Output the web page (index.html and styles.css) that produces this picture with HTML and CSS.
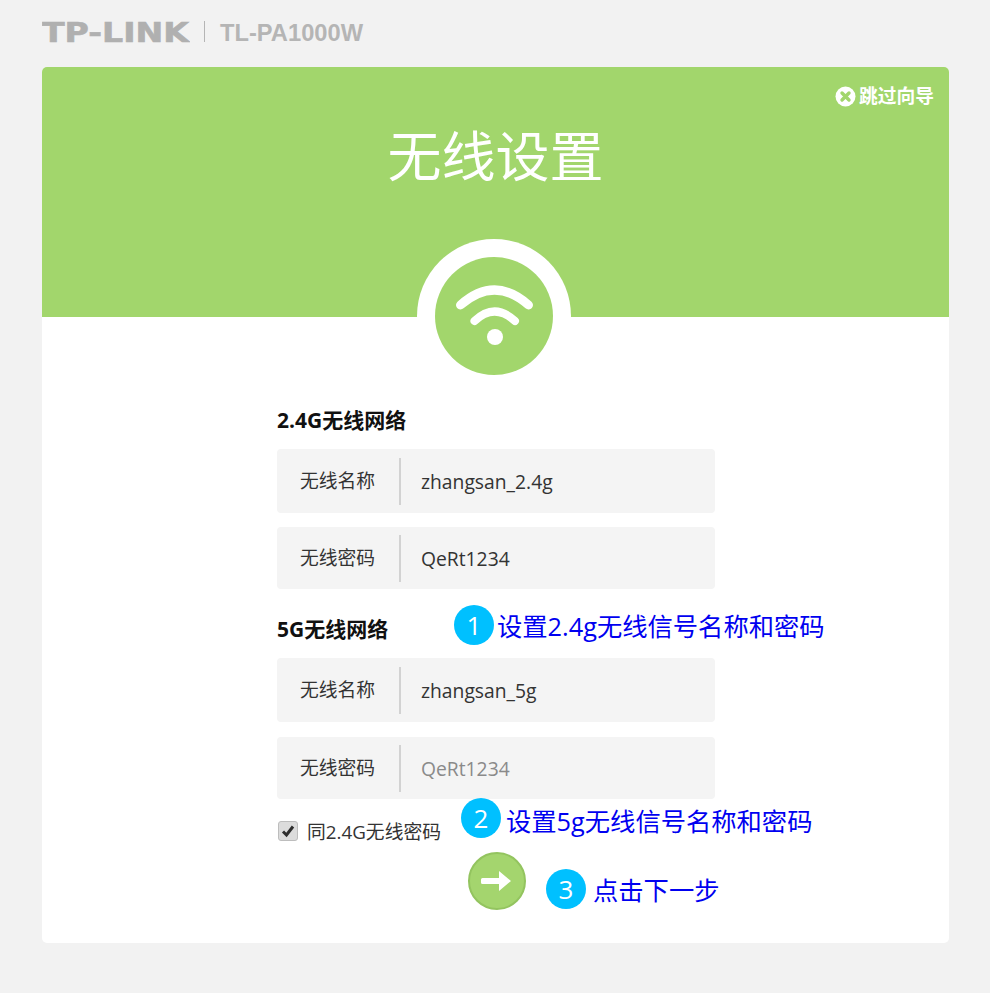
FILE: index.html
```html
<!DOCTYPE html>
<html lang="zh-CN">
<head>
  <meta charset="UTF-8" />
  <title>无线设置</title>
  <link rel="stylesheet" href="styles.css">
</head>
<body>

  <div class="topbar">
    <svg class="logo" width="148" height="32" viewBox="0 0 148 32">
      <text x="0" y="24" textLength="147" lengthAdjust="spacingAndGlyphs">TP-LINK</text>
    </svg>
    <span class="topbar-sep"></span>
    <span class="model">TL-PA1000W</span>
  </div>

  <div class="card">
    <div class="banner">
      <a class="skip">
        <svg width="21" height="21" viewBox="0 0 21 21">
          <circle cx="10.5" cy="10.5" r="10" fill="#fff"/>
          <path d="M7 7l7 7M14 7l-7 7" stroke="#a2d66c" stroke-width="3.4" stroke-linecap="round"/>
        </svg>
        <span>跳过向导</span>
      </a>
      <h1>无线设置</h1>
      <div class="ring">
        <svg width="118" height="118" viewBox="0 0 118 118">
          <circle cx="59" cy="59" r="59" fill="#a2d66c"/>
          <path d="M25.5 48Q59.5 18 93.5 48" fill="none" stroke="#fff" stroke-width="9" stroke-linecap="round"/>
          <path d="M39.5 64Q59.5 45 80 64" fill="none" stroke="#fff" stroke-width="8" stroke-linecap="round"/>
          <circle cx="60" cy="80" r="8" fill="#fff"/>
        </svg>
      </div>
    </div>

    <div class="form">
      <h3>2.4G无线网络</h3>
      <div class="field field-tall">
        <span class="field-label">无线名称</span>
        <span class="field-value">zhangsan_2.4g</span>
      </div>
      <div class="field">
        <span class="field-label">无线密码</span>
        <span class="field-value">QeRt1234</span>
      </div>

      <h3 class="second">5G无线网络</h3>
      <div class="field field-tall">
        <span class="field-label">无线名称</span>
        <span class="field-value">zhangsan_5g</span>
      </div>
      <div class="field field-low">
        <span class="field-label">无线密码</span>
        <span class="field-value muted">QeRt1234</span>
      </div>

      <label class="same">
        <span class="checkbox">
          <svg width="14" height="14" viewBox="0 0 14 14">
            <path d="M2 7.500l3.500 3.500 6.500-8.500" fill="none" stroke="#2e2e2e" stroke-width="3"/>
          </svg>
        </span>
        同2.4G无线密码
      </label>

      <button class="next">
        <svg width="32" height="22" viewBox="0 0 32 22">
          <path d="M1.500 8h16.500v-7l12 10-12 10v-7h-16.500q-1.500 0-1.500-1.500v-3q0-1.500 1.500-1.500z" fill="#fff"/>
        </svg>
      </button>
    </div>
  </div>

  <div class="note note-1"><span class="num">1</span><span class="note-text">设置2.4g无线信号名称和密码</span></div>
  <div class="note note-2"><span class="num">2</span><span class="note-text">设置5g无线信号名称和密码</span></div>
  <div class="note note-3"><span class="num">3</span><span class="note-text">点击下一步</span></div>

</body>
</html>
```

FILE: styles.css
```css
body {
  margin: 0;
  height: 993px;
  overflow: hidden;
  background: #f2f2f2;
  font-family: "Open Sans", "Noto Sans CJK SC", sans-serif;
  color: #333;
  position: relative;
}

.topbar {
  height: 67px;
  padding-left: 42px;
  display: flex;
  align-items: center;
  box-sizing: border-box;
}

.logo {
  margin-top: 1px;
}

.logo text {
  font-family: "DejaVu Sans", sans-serif;
  font-weight: bold;
  font-size: 26px;
  fill: #b0b0b0;
  stroke: #b0b0b0;
  stroke-width: 0.6px;
}

.topbar-sep {
  width: 1px;
  height: 21px;
  background: #b5b5b5;
  margin: -4px 15px 0 14px;
}

.model {
  font-family: "Liberation Sans", sans-serif;
  font-weight: bold;
  font-size: 23.700px;
  color: #b5b5b5;
}

.card {
  width: 907px;
  height: 876px;
  margin-left: 42px;
  background: white;
  border-radius: 5px;
  overflow: hidden;
}

.banner {
  height: 250px;
  background: #a2d66c;
  position: relative;
  text-align: center;
}

.banner h1 {
  margin: 0;
  padding-top: 50px;
  font-size: 54px;
  line-height: 78px;
  font-weight: normal;
  color: white;
}

.skip {
  position: absolute;
  top: 18px;
  right: 15px;
  display: flex;
  align-items: center;
  gap: 3px;
  font-size: 18.750px;
  font-weight: bold;
  line-height: 22px;
  color: white;
}

.ring {
  position: absolute;
  left: 375px;
  top: 172px;
  width: 154px;
  height: 154px;
  border-radius: 50%;
  background: white;
  display: flex;
  justify-content: center;
  align-items: center;
}

.form {
  width: 438px;
  margin-left: 235px;
}

.form h3 {
  margin: 0;
  padding-top: 89px;
  font-size: 21px;
  line-height: 28px;
  color: #111;
}

.form h3 + .field {
  margin-top: 15px;
}

.form h3.second {
  padding-top: 26px;
}

.field {
  height: 62px;
  margin-top: 14px;
  background: #f4f4f4;
  border-radius: 4px;
  display: flex;
  align-items: center;
  font-size: 18.750px;
}

.field-tall {
  height: 64px;
}

.field-low {
  margin-top: 15px;
}

.field-label {
  width: 124px;
  height: 47px;
  line-height: 46px;
  padding-left: 23px;
  box-sizing: border-box;
  border-right: 2px solid #d2d2d2;
}

.field-value {
  padding-left: 20px;
  font-size: 19.300px;
}

.muted {
  color: #8a8a8a;
}

.same {
  display: flex;
  align-items: center;
  gap: 9px;
  margin-top: 19px;
  height: 26px;
  padding-left: 1px;
  font-size: 18.800px;
}

.checkbox {
  width: 18px;
  height: 18px;
  border: 1px solid #bdbdbd;
  border-radius: 3px;
  background: #dcdcdc;
  display: flex;
  align-items: center;
  justify-content: center;
}

.next {
  display: flex;
  align-items: center;
  justify-content: center;
  width: 58px;
  height: 58px;
  margin: 8px 0 0 191px;
  padding: 0;
  box-sizing: border-box;
  border: 2px solid #93c45f;
  border-radius: 50%;
  background: #a4d56e;
}

/* numbered callouts drawn over the form */
.note {
  position: absolute;
  display: flex;
  align-items: flex-start;
  gap: 3px;
  font-size: 25.300px;
  line-height: 40px;
  color: #0000f0;
}

.note-text {
  margin-top: 1px;
}

.num {
  width: 40px;
  height: 40px;
  border-radius: 50%;
  background: #00c0ff;
  color: white;
  font-size: 26px;
  text-align: center;
}

.note-1 { left: 454px; top: 605px; }
.note-2 { left: 461px; top: 798px; gap: 5px; }
.note-2 .note-text { margin-top: 3px; }
.note-3 { left: 546px; top: 869px; gap: 7px; }
```
